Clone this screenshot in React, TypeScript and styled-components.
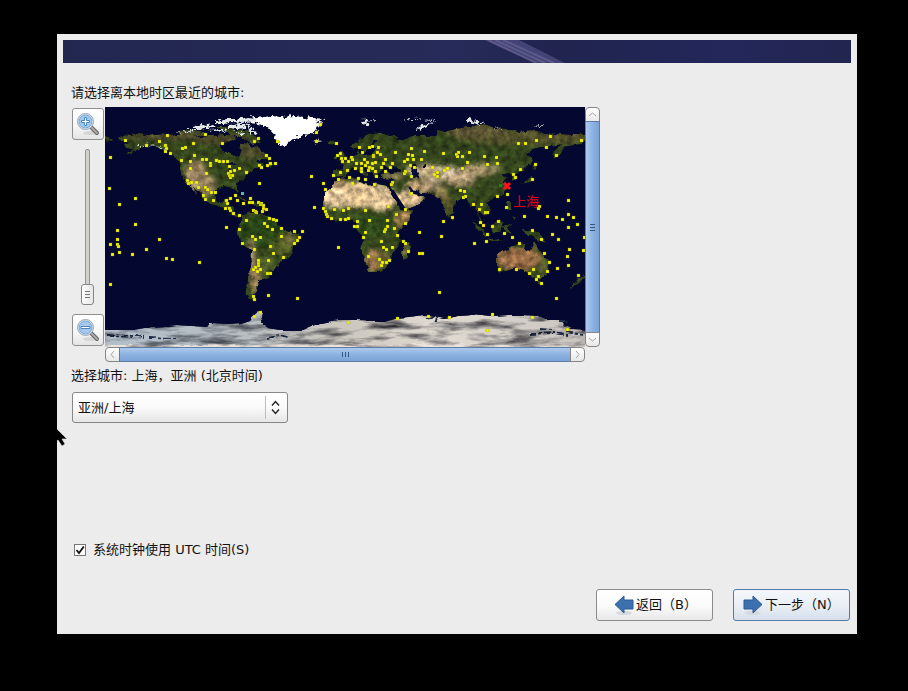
import React, { useState } from "react";
import styled, { createGlobalStyle } from "styled-components";

const GlobalStyle = createGlobalStyle`
  * { box-sizing: border-box; }
  body {
    margin: 0;
    background: #000;
    color: #111;
    font-family: "DejaVu Sans", "Noto Sans CJK SC", sans-serif;
    font-size: 13px;
    line-height: 20px;
  }
  button, select, input { font: inherit; color: inherit; }
`;

const Screen = styled.main`
  position: relative;
  display: flex;
  min-height: 100vh;
  padding: 34px 51px 57px 57px;
`;

const Installer = styled.form`
  flex: 1;
  min-width: 0;
  display: flex;
  flex-direction: column;
  padding: 6px;
  background: #ececec;
`;

const Banner = styled.header`
  height: 23px;
  overflow: hidden;
  background: linear-gradient(90deg, #222750, #272b59 50%, #20244e 62%, #23275a 85%, #22254e);
`;

const Streak = styled.svg`
  display: block;
  margin-left: 53%;
`;

const Content = styled.section`
  flex: 1;
  display: flex;
  flex-direction: column;
  align-items: flex-start;
  padding: 20px 8px 7px;
`;

const Caption = styled.label`
  display: block;
`;

const MapArea = styled.div`
  display: grid;
  grid-template-columns: 34px minmax(0, 480px) 15px;
  grid-template-rows: auto 15px;
  margin: 4px 0;
`;

const ZoomColumn = styled.div`
  display: flex;
  flex-direction: column;
  align-items: flex-start;
  padding: 1px;
`;

const ZoomButton = styled.button`
  display: grid;
  place-items: center;
  width: 32px;
  height: 32px;
  padding: 0;
  border: 1px solid #8f8f8f;
  border-radius: 3px;
  background: linear-gradient(#fff, #f7f7f7 55%, #e4e4e4);
`;

const ZoomSlider = styled.input`
  appearance: none;
  writing-mode: vertical-lr;
  direction: rtl;
  flex: 1;
  min-height: 0;
  width: 14px;
  margin: 9px 8px;
  background: transparent;
  &::-webkit-slider-runnable-track {
    width: 5px;
    border: 1px solid #96948f;
    border-radius: 2px;
    background: #d3d1cd;
  }
  &::-webkit-slider-thumb {
    appearance: none;
    width: 13px;
    height: 21px;
    margin-left: -5px;
    margin-bottom: -1px;
    border: 1px solid #858585;
    border-radius: 3px;
    background:
      linear-gradient(#777, #777) center 6px / 5px 1px no-repeat,
      linear-gradient(#777, #777) center 9px / 5px 1px no-repeat,
      linear-gradient(#777, #777) center 12px / 5px 1px no-repeat,
      linear-gradient(90deg, #fff, #e6e6e6);
  }
`;

const MapSvg = styled.svg`
  display: block;
  width: 100%;
  height: auto;
  background: #040831;
`;

const Scrollbar = styled.div<{ $vertical?: boolean }>`
  display: flex;
  flex-direction: ${(p) => (p.$vertical ? "column" : "row")};
  grid-column: ${(p) => (p.$vertical ? 3 : 2)};
`;

const ScrollStep = styled.button<{ $corner: string }>`
  display: grid;
  place-items: center;
  flex: 0 0 15px;
  width: 15px;
  height: 15px;
  padding: 0;
  border: 1px solid #858585;
  border-radius: ${(p) => p.$corner};
  background: linear-gradient(#fff, #e8e8e8);
`;

const ScrollThumb = styled.button<{ $vertical?: boolean }>`
  flex: 1;
  display: grid;
  place-items: center;
  padding: 0;
  border: 1px solid #5c7ca8;
  margin: ${(p) => (p.$vertical ? "-1px 0" : "0 -1px")};
  background: linear-gradient(${(p) => (p.$vertical ? "90deg" : "180deg")}, #aecaed, #8cb2e1 50%, #7ba3d6);
`;

const SelectBox = styled.div`
  position: relative;
  width: 216px;
  margin: 6px 1px 0;
`;

const CitySelect = styled.select`
  appearance: none;
  width: 100%;
  height: 31px;
  padding: 0 28px 0 5px;
  border: 1px solid #878787;
  border-radius: 3px;
  background: linear-gradient(#fff, #fafafa 50%, #e6e6e6);
`;

const SelectArrows = styled.svg`
  position: absolute;
  top: 0;
  right: 0;
  pointer-events: none;
`;

const UtcRow = styled.label`
  display: flex;
  align-items: center;
  gap: 7px;
  margin: auto 3px 0;
`;

const UtcCheck = styled.input`
  appearance: none;
  width: 12px;
  height: 12px;
  margin: 0;
  border: 1px solid #777;
  background: #fff;
  &:checked {
    background: #fff url("data:image/svg+xml,%3Csvg xmlns='http://www.w3.org/2000/svg' viewBox='0 0 10 10'%3E%3Cpath d='M1.5 5l2.5 3L8.8 1.5' fill='none' stroke='%23111' stroke-width='1.8'/%3E%3C/svg%3E") center / 10px no-repeat;
  }
`;

const Actions = styled.footer`
  display: flex;
  justify-content: flex-end;
  gap: 20px;
  align-self: stretch;
  margin: 29px -7px 0 0;
`;

const ActionButton = styled.button<{ $primary?: boolean }>`
  display: flex;
  align-items: center;
  gap: 2px;
  width: 117px;
  height: 32px;
  padding: 0 0 0 ${(p) => (p.$primary ? 9 : 17)}px;
  white-space: nowrap;
  border: 1px solid ${(p) => (p.$primary ? "#557aa8" : "#8b8b8b")};
  border-radius: 3px;
  background: ${(p) =>
    p.$primary ? "linear-gradient(#f4f8fc, #e9eef5 55%, #d5dfeb)" : "linear-gradient(#fff, #fafafa 55%, #e8e8e8)"};
`;

const Pointer = styled.svg`
  position: absolute;
  left: 50px;
  top: 424px;
`;

const NORTH_AMERICA =
  "M16 33L19 29 26 28 32 26 43 27 52 28 61 27 69 28 78 28 87 29 96 30 105 29 113 29 114 25 118 26 120 29 127 27 131 31 124 35 117 36 115 40 117 44 124 45 129 47 133 51 135 48 137 44 134 39 136 37 143 36 148 40 153 41 159 46 165 51 160 53 152 53 153 55 157 56 160 59 152 60 147 63 147 65 141 67 140 70 138 73 132 77 132 81 133 86 131 85 129 81 121 80 114 81 111 84 110 90 112 95 116 96 119 95 120 92 124 91 123 97 129 100 128 106 132 108 137 109 133 111 127 108 122 103 113 99 105 97 100 93 97 88 91 82 88 79 93 89 88 83 84 77 78 72 76 68 75 62 75 56 71 52 67 47 62 43 57 41 50 39 43 39 37 41 29 45 20 48 27 43 20 40 19 37 24 35z";
const SOUTH_AMERICA =
  "M137 109L144 104 147 106 157 106 164 110 171 113 174 119 181 124 190 126 194 129 193 134 188 140 187 146 184 150 176 154 173 159 169 164 163 165 164 170 158 173 154 174 155 177 151 181 152 185 148 188 151 194 144 191 140 187 142 178 143 170 146 160 147 144 139 138 136 132 132 127 133 120 137 115z";
const AFRICA =
  "M232 72L240 71 253 70 255 75 261 76 267 79 270 76 283 79 286 87 289 92 297 104 308 103 304 113 299 118 293 125 295 133 293 140 287 147 286 153 282 160 276 165 264 165 261 158 259 149 256 142 258 133 256 126 251 121 252 116 245 112 238 113 229 114 223 109 217 102 219 91 222 84 227 80 229 76z";
const EURASIA =
  "M228 71L228 63 239 62 239 58 234 56 241 54 243 52 249 49 252 47 251 44 254 43 255 48 267 47 270 44 272 41 280 40 269 40 268 37 273 33 269 33 264 40 261 45 257 47 256 42 253 41 248 43 246 39 252 34 259 29 265 26 273 25 282 27 294 30 289 33 299 32 307 29 312 29 323 29 331 29 333 23 338 24 347 23 362 20 373 18 379 17 391 21 403 22 413 25 427 23 440 26 453 27 467 28 480 28 480 33 477 37 459 40 456 47 449 52 448 45 457 37 447 40 436 40 429 42 421 48 428 51 427 56 420 62 416 64 411 67 412 72 408 74 407 68 403 66 397 69 402 70 399 74 403 80 399 87 390 91 387 92 381 95 386 103 380 109 373 102 374 109 377 113 380 118 375 114 373 108 371 103 369 98 365 99 361 91 356 92 348 99 348 106 343 110 339 102 336 92 333 91 329 87 316 86 308 82 304 80 308 86 314 88 320 91 313 98 300 103 296 98 292 92 286 82 285 79 288 72 276 71 276 67 282 64 295 66 296 63 290 60 285 62 280 58 276 64 273 67 274 71 271 71 265 64 257 59 259 63 264 67 261 71 258 67 252 61 245 62 239 70z";
const AUSTRALIA =
  "M391 157L391 149 402 142 408 138 414 136 421 137 420 142 425 144 429 134 434 142 440 150 445 156 442 165 439 171 431 172 425 167 419 163 411 161 402 164 394 165z";
const ISLANDS =
  "M222 34l5-1 5 3-7 2zM233 47l4-4 3 6-1 4-6 1 2-4zM229 50l3-2 1 4-4 1zM299 137l6-1 1 4-4 11-4 1-1-6zM367 112l9 9 8 9-4 0-10-11zM386 118l9-6 4 3-4 10-8 0zM399 118l9-1-5 4 4 7-6-2zM401 95l4 0 2 8-3 1zM406 109l5 1-2 4zM381 131l13 2 7 1-14 0zM415 121l8 2 11 2 9 12-8-3-13-6zM427 65l1-8 4 4-4 3zM427 68l0 6-5 3-9 1 9-4zM426 48l3 5-2 4zM477 168l4 1-7 7-9 6-2-1 9-7zM432 174l4 0-2 4zM346 108l3 3-2 2zM127 89l10 2 7 2-7 0zM147 95l9 1-4 3-5-1zM164 53l6 4-5 2zM13 30l6 1-5 2zM0 30l10 3-10 2z";
const ARCTIC =
  "M74 24l12-2 13 3 3 3-14 1-12-1zM112 20l11 0 8 3 12 1 10 7 3 5-8 1-12-6-9-3-7-3z";
const GREENLAND = "M143 15L152 11 166 9 176 10 190 9 207 11 222 12 212 15 218 17 211 20 213 24 204 27 194 30 187 33 183 35 180 40 174 37 170 31 167 24 158 18z";
const ANTARCTICA =
  "M-8 223L28 223 45 220 60 219 72 218 88 219 102 220 105 216 123 217 136 216 145 213 148 209 154 205 158 206 156 214 162 221 175 223 198 223 207 219 216 216 232 213 252 213 278 214 290 211 305 210 317 208 325 209 340 212 354 209 368 208 387 210 403 209 418 209 433 210 440 213 456 213 460 218 468 222 488 223 488 248 -8 248z";
const LAND = [NORTH_AMERICA, SOUTH_AMERICA, AFRICA, EURASIA, AUSTRALIA, ISLANDS, ARCTIC].join("");

const CITIES = `20,33 5,50 41,38 54,34 62,28 60,38 61,41 60,44 65,46 77,41 80,40 88,36 100,27 117,36 89,48 76,53 85,54 85,61 97,52 101,52
105,56 105,58 111,53 114,54 118,54 122,54 124,59 129,63 134,61 141,65 125,64 123,66 127,68 125,70 124,68 101,66 154,58 156,60 149,34 153,31
154,76 4,81 14,97 30,91 12,123 30,117 82,73 83,76 86,75 91,75 93,80 100,80 102,82 98,88 100,92 108,93 106,85 110,85 121,93 125,91
122,96 120,101 124,101 125,103 128,106 134,108 130,88 132,93 138,96 144,95 147,95 145,91 153,95 156,96 158,98 158,101 157,104 155,97 148,103 150,104 151,105 141,113
121,120 134,122 159,116 215,17 211,25 211,34 172,34 231,36 254,40 264,40 267,39 273,40 257,45 235,46 232,48 236,51 240,51 237,54 243,54 246,50
247,52 250,61 251,56 256,56 259,52 260,58 256,61 256,64 262,55 264,60 267,56 270,55 268,48 268,49 272,45 275,47 280,52 278,56 276,60 263,63
267,61 270,64 271,69 280,64 290,45 287,56 285,60 306,41 303,47 307,48 308,52 302,52 299,54 305,58 309,60 300,64 299,66 306,69 316,52 319,44
206,69 228,68 218,76 220,82 233,72 235,65 244,70 242,63 253,71 260,72 247,76 269,77 287,75 286,77 209,100 218,101 220,104 221,107 222,109 226,111 229,102
238,103 243,101 235,112 240,112 243,111 260,103 264,113 252,114 249,119 252,119 260,125 283,99 291,107 282,113 282,119 280,122 289,121 300,116 314,125 300,102
306,86 161,48 164,51 165,56 162,58 170,56 161,102 164,111 168,112 171,113 162,119 167,122 176,121 189,124 197,124 338,46 351,47 353,45 352,49 357,49
364,45 379,49 382,57 391,50 392,56 413,36 420,36 431,33 445,29 441,40 451,48 476,33 430,57 427,72 415,62 408,67 410,70 327,60 332,65 329,67
332,69 339,63 342,61 362,55 357,61 355,83 359,84 360,89 358,90 368,97 376,97 374,102 380,105 382,105 392,89 402,87 401,100 419,109 375,115 378,118
387,119 393,114 382,127 399,126 427,123 447,127 433,101 434,99 463,93 442,109 451,110 457,112 463,107 468,110 472,117 463,120 347,110 338,114 12,132 5,137
12,137 13,139 14,145 7,147 27,147 41,142 54,132 61,151 67,152 94,155 5,177 137,136 147,129 150,132 155,130 149,142 153,153 153,156 150,160 153,158
155,162 148,162 152,164 148,189 149,192 149,209 155,205 176,129 194,130 192,133 189,136 165,139 168,146 178,150 163,153 162,166 165,166 163,188 192,191 233,140
258,130 279,124 292,128 276,134 278,140 281,142 287,140 263,149 274,152 277,155 281,155 284,153 276,158 298,134 300,136 303,144 314,146 317,146 243,215 292,211
336,129 369,136 381,134 407,130 414,136 436,132 453,132 479,130 464,142 478,143 439,146 462,149 463,158 444,155 442,164 452,161 473,168 428,162 411,162 394,162
424,166 433,169 431,172 436,176 451,191 334,185 323,209 344,210 387,207 427,210 462,222 382,223`
  .split(/\s+/)
  .map((pair) => pair.split(",").map(Number));

const CITY_PATH = CITIES.map(([x, y]) => `M${x - 1} ${y - 1}h3v3h-3z`).join("");

type Patch = [number, number, number, number, string];
const PATCHES: Patch[] = [
  // tundra and northern rim
  [60, 29, 50, 5, "#4c4a2b"], [115, 32, 30, 6, "#4a4727"], [146, 44, 14, 8, "#4b4b29"], [420, 30, 70, 8, "#53512c"], [370, 24, 30, 6, "#5f5735"],
  // American west, Mexico and Andes
  [91, 66, 11, 13, "#8f7a56"], [101, 78, 10, 11, "#9a845e"], [87, 74, 5, 10, "#a58e6c"], [147, 152, 3, 23, "#b3946f"], [151, 173, 5, 15, "#967a51"],
  [177, 138, 11, 9, "#596427"], [185, 131, 6, 7, "#6a6535"], [162, 158, 9, 9, "#51602a"],
  // Sahara, Arabia and southern Africa
  [250, 88, 36, 13, "#dcbd8d"], [231, 91, 15, 10, "#e2c59a"], [276, 91, 15, 13, "#e0c396"], [304, 92, 14, 9, "#dfbf91"], [236, 76, 10, 4, "#a48b61"],
  [299, 109, 8, 5, "#b58b58"], [295, 115, 6, 6, "#8d7142"], [269, 153, 8, 11, "#ab8054"], [277, 151, 8, 7, "#756635"], [301, 144, 4, 6, "#716a33"],
  // Iran and central Asia
  [316, 79, 15, 7, "#b0956b"], [288, 69, 11, 4, "#897d52"], [321, 64, 19, 7, "#c4ad84"], [329, 76, 8, 6, "#a99777"], [353, 68, 19, 7, "#c6ac86"],
  [374, 63, 18, 6, "#b19a6e"], [387, 61, 9, 5, "#8b8358"], [356, 76, 15, 4, "#92825d"], [342, 64, 9, 5, "#c9baa0"], [337, 86, 6, 7, "#86754a"],
  [344, 98, 5, 8, "#5c5b2c"],
  // Australia
  [414, 152, 23, 11, "#9b6b45"], [402, 154, 10, 8, "#996d48"], [424, 151, 10, 8, "#a3754c"], [438, 160, 5, 10, "#5f6430"], [427, 139, 6, 4, "#6e6e38"],
];

function WorldMap() {
  return (
    <MapSvg viewBox="0 0 480 240" role="img" aria-label="世界时区地图">
      <defs>
        <clipPath id="land"><path d={LAND} /></clipPath>
        <filter id="soft" x="-30%" y="-30%" width="160%" height="160%"><feGaussianBlur stdDeviation="2" /></filter>
        <filter id="terrain" x="0" y="0" width="100%" height="100%" colorInterpolationFilters="sRGB">
          <feTurbulence type="fractalNoise" baseFrequency="0.16" numOctaves="4" seed="8" result="noise" />
          <feDisplacementMap in="SourceGraphic" in2="noise" scale="5" xChannelSelector="R" yChannelSelector="G" result="rough" />
          <feColorMatrix in="noise" values="1.1 0 0 0 .08  1.1 0 0 0 .08  1.1 0 0 0 .08  0 0 0 0 1" result="grain" />
          <feComposite in="rough" in2="grain" operator="arithmetic" k1="0.9" k2="0.42" result="mixed" />
          <feComposite in="mixed" in2="rough" operator="in" />
        </filter>
        <filter id="ice" filterUnits="userSpaceOnUse" x="-8" y="195" width="496" height="60" colorInterpolationFilters="sRGB">
          <feTurbulence type="fractalNoise" baseFrequency="0.03 0.13" numOctaves="5" seed="5" result="noise" />
          <feDisplacementMap in="SourceGraphic" in2="noise" scale="5" xChannelSelector="R" yChannelSelector="G" result="rough" />
          <feColorMatrix in="noise" values="1.7 0 0 0 0  1.7 0 0 0 0  1.6 0 0 0 .06  0 0 0 0 1" result="grain" />
          <feComposite in="rough" in2="grain" operator="arithmetic" k1="1" k2="0.08" result="mixed" />
          <feComposite in="mixed" in2="rough" operator="in" />
        </filter>
        <filter id="shards" filterUnits="userSpaceOnUse" x="0" y="0" width="480" height="50" colorInterpolationFilters="sRGB">
          <feTurbulence type="fractalNoise" baseFrequency="0.3" numOctaves="2" seed="3" result="noise" />
          <feDisplacementMap in="SourceGraphic" in2="noise" scale="8" xChannelSelector="R" yChannelSelector="G" />
        </filter>
        <linearGradient id="iceTone">
          <stop stopColor="#a4b0bb" /><stop offset=".3" stopColor="#aab0b3" /><stop offset=".5" stopColor="#bdb8b0" />
          <stop offset=".7" stopColor="#d0cac2" /><stop offset="1" stopColor="#b9b4b0" />
        </linearGradient>
      </defs>
      <g filter="url(#terrain)">
        <rect width="480" height="240" fill="none" />
        <g clipPath="url(#land)">
          <rect width="480" height="240" fill="#35461d" />
          <ellipse cx="158" cy="125" rx="24" ry="16" fill="#294517" />
          <ellipse cx="267" cy="119" rx="24" ry="11" fill="#304a1b" />
          <g filter="url(#soft)">
            {PATCHES.map(([cx, cy, rx, ry, fill], i) => <ellipse key={i} {...{ cx, cy, rx, ry, fill }} />)}
          </g>
        </g>
        <path d="M277 64l4-5 4 3 6-2 4 4-9 2zM305 58l5-1 1 4 3 4-1 6-5-1-1-6zM318 58l3-1 0 4-3 0zM121 57l8-2 2 3-3 0-3 6-2 0 2-5zM132 61l6-1-5 3z" fill="#050a31" />
      </g>
      <path d="M287 83l5 8 8 12" fill="none" stroke="#050830" strokeWidth="3" />
      <path d="M304 80l5 6 6 1" fill="none" stroke="#050830" strokeWidth="2" />
      <g filter="url(#ice)">
        <path d={ANTARCTICA} fill="url(#iceTone)" />
        <path d="M0 238h120l60-1h120l180 2v8H0z" fill="#d9d3cb" />
      </g>
      <g filter="url(#shards)">
        <path d={GREENLAND} fill="#fff" />
        <g fill="#e6eae8">
          <path d="M110 14l12-2 10 0 12-2 8 1-6 3-10 2-9-1-7 2-10 0zM124 18l12-1 9 1-4 3-9 1-8-1zM88 20l9-3 6 1 9-1-2 3-9 1-5 2-8 0zM104 23l12-1 6 2-10 1zM78 24l7-1 5 1-6 1zM130 25l7 1 6 3-8-1zM143 21l7 3 2 4-7-3z" />
          <path d="M255 14l18-1-8 2-4 3zM362 12l10 2 8 2-3 1-10-1-5-2zM313 20l9-3 8-1-8 3-8 4zM427 19l12-1-5 2zM318 13l14-1-6 2z" />
        </g>
        <g fill="none" stroke="#d3d8ca">
          <path d="M34 40l7-2 8 0 7 3 6 2M74 25l9-1M94 22l8-1M298 13l18-1M390 21l8 1" strokeDasharray="3 1" />
          <path d="M211 17l4-3M209 34l6-1M170 32l3 4" />
        </g>
      </g>
      <g filter="url(#shards)" />
      <g filter="url(#ice)">
        <path d="M2 228l29 1 9 1M45 231l28 1M424 227l25-1 14 2M435 222l12 1M454 214l9 0-5 5M461 225l17 3M162 231l12-2 9 2M322 212l12-2-3 5" fill="none" stroke="#1f2c45" strokeWidth="2" strokeDasharray="7 2 3 2" />
      </g>
      <path d={CITY_PATH} fill="#fafa00" stroke="#838800" strokeOpacity=".5" strokeWidth="0.6" />
      <rect x="136" y="85" width="3" height="3" fill="#51bcae" />
      <rect x="394" y="77" width="3" height="3" fill="#078d20" />
      <path d="M399 76l6 6m0-6l-6 6" stroke="#ff101c" strokeWidth="3" />
      <text x="408" y="99" fill="#e4001b" fontSize="13">上海</text>
    </MapSvg>
  );
}

function Magnifier({ plus }: { plus?: boolean }) {
  return (
    <svg width="24" height="24" viewBox="0 0 24 24" aria-hidden="true">
      <ellipse cx="15" cy="21" rx="8" ry="2" fill="#d5d5d5" />
      <path d="M14 14l7 7" stroke="#666" strokeWidth="4" strokeLinecap="round" />
      <path d="M14 14l7 7" stroke="#aaa" strokeWidth="2" strokeLinecap="round" />
      <circle cx="9.5" cy="9.5" r="8" fill="#d6e3ef" stroke="#9aa8b4" />
      <circle cx="9.5" cy="9.5" r="6.4" fill="#a5c9ed" stroke="#7fabda" />
      <path d={plus ? "M8.5 5.5h2v3h3v2h-3v3h-2v-3h-3v-2h3z" : "M5 8.5h9v2H5z"} fill="#fff" stroke="#4a86c4" />
    </svg>
  );
}

const Chevron = ({ d }: { d: string }) => (
  <svg width="9" height="9" viewBox="0 0 9 9" aria-hidden="true"><path d={d} fill="none" stroke="#a3a3a3" /></svg>
);

const Grip = ({ d }: { d: string }) => (
  <svg width="9" height="9" viewBox="0 0 9 9" aria-hidden="true"><path d={d} stroke="#36557f" fill="none" /></svg>
);

const Arrow = ({ d }: { d: string }) => (
  <svg width="20" height="20" viewBox="0 0 20 20" aria-hidden="true">
    <ellipse cx="10" cy="18" rx="8" ry="2" fill="#d5dade" />
    <path d={d} fill="#3d70af" stroke="#2b5a93" strokeLinejoin="round" />
  </svg>
);

export default function App() {
  const [zoom, setZoom] = useState(0);
  const [utc, setUtc] = useState(true);
  return (
    <Screen>
      <GlobalStyle />
      <Installer onSubmit={(e) => e.preventDefault()}>
        <Banner>
          <Streak width="90" height="23" viewBox="0 0 90 23" aria-hidden="true">
            <path d="M4 0h34l46 23H54z" fill="#57538b" opacity=".65" />
            <path d="M7 0l48 23M14 0l50 23M22 0l51 23" stroke="#8985b0" strokeWidth="2" opacity=".35" />
          </Streak>
        </Banner>
        <Content>
          <Caption htmlFor="city">请选择离本地时区最近的城市:</Caption>
          <MapArea>
            <ZoomColumn>
              <ZoomButton type="button" aria-label="放大" onClick={() => setZoom(Math.min(100, zoom + 10))}><Magnifier plus /></ZoomButton>
              <ZoomSlider type="range" aria-label="缩放" min={0} max={100} value={zoom} onChange={(e) => setZoom(Number(e.target.value))} />
              <ZoomButton type="button" aria-label="缩小" onClick={() => setZoom(Math.max(0, zoom - 10))}><Magnifier /></ZoomButton>
            </ZoomColumn>
            <WorldMap />
            <Scrollbar $vertical>
              <ScrollStep type="button" aria-label="向上" $corner="4px 4px 0 0"><Chevron d="M1 6l3.5-3L8 6" /></ScrollStep>
              <ScrollThumb type="button" aria-label="垂直滚动" $vertical><Grip d="M2 1.5h5M2 4.5h5M2 7.5h5" /></ScrollThumb>
              <ScrollStep type="button" aria-label="向下" $corner="0 0 4px 4px"><Chevron d="M1 3l3.5 3L8 3" /></ScrollStep>
            </Scrollbar>
            <Scrollbar>
              <ScrollStep type="button" aria-label="向左" $corner="4px 0 0 4px"><Chevron d="M6 1L3 4.5 6 8" /></ScrollStep>
              <ScrollThumb type="button" aria-label="水平滚动"><Grip d="M1.5 2v5M4.5 2v5M7.5 2v5" /></ScrollThumb>
              <ScrollStep type="button" aria-label="向右" $corner="0 4px 4px 0"><Chevron d="M3 1l3 3.5L3 8" /></ScrollStep>
            </Scrollbar>
          </MapArea>
          <Caption htmlFor="city">选择城市: 上海，亚洲 (北京时间)</Caption>
          <SelectBox>
            <CitySelect id="city" defaultValue="shanghai"><option value="shanghai">亚洲/上海</option></CitySelect>
            <SelectArrows width="24" height="31" viewBox="0 0 24 31" aria-hidden="true">
              <path d="M1.5 4v23" stroke="#bdbdbd" />
              <path d="M8 13.5l3.5-4 3.5 4M8 17.5l3.5 4 3.5-4" fill="none" stroke="#222" strokeWidth="1.4" />
            </SelectArrows>
          </SelectBox>
          <UtcRow>
            <UtcCheck type="checkbox" checked={utc} onChange={(e) => setUtc(e.target.checked)} />
            系统时钟使用 UTC 时间(S)
          </UtcRow>
          <Actions>
            <ActionButton type="button"><Arrow d="M1 9.5L10 1v4h9v9h-9v4z" />返回（B）</ActionButton>
            <ActionButton type="submit" $primary><Arrow d="M19 9.5L10 1v4H1v9h9v4z" />下一步（N）</ActionButton>
          </Actions>
        </Content>
      </Installer>
      <Pointer width="20" height="24" viewBox="0 0 20 24" aria-hidden="true">
        <path d="M4 2v18l4-4 4 6 3-2-3-5h5z" fill="#000" stroke="#ddd" strokeWidth=".6" />
        <path d="M0 0h7v24H0z" fill="#000" />
      </Pointer>
    </Screen>
  );
}
